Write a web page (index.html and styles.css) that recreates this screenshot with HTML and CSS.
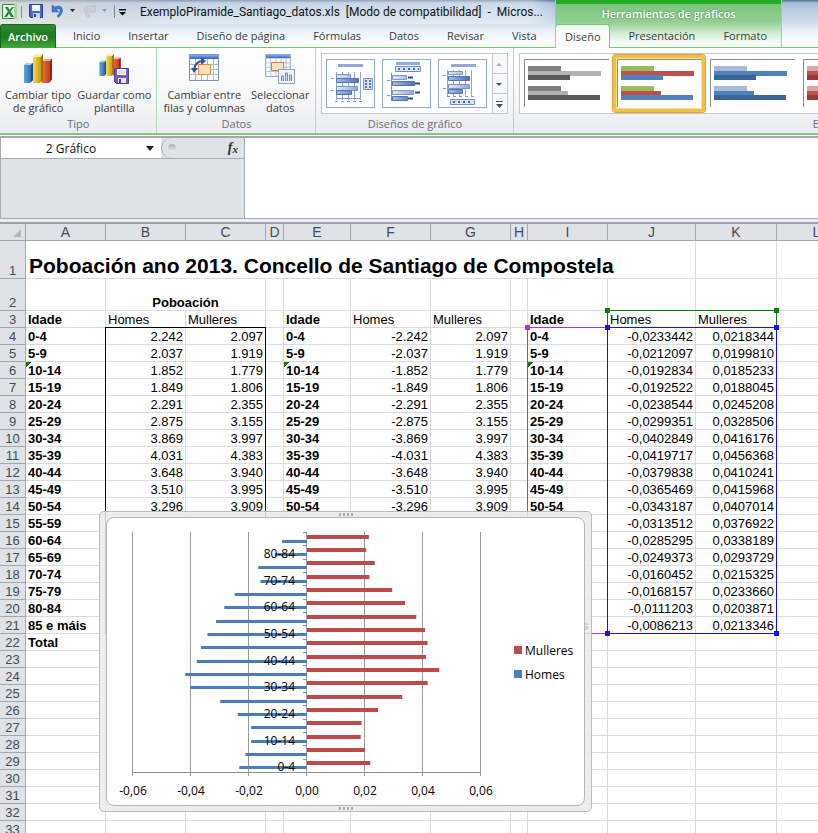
FILE: index.html
```html
<!DOCTYPE html>
<html lang="gl">
<head>
<meta charset="utf-8">
<title>ExemploPiramide_Santiago_datos.xls</title>
<link rel="stylesheet" href="styles.css">
</head>
<body>
<svg class="defs" aria-hidden="true">
  <defs>
    <linearGradient id="gb"><stop offset="0" stop-color="#5fa5e0"/><stop offset="1" stop-color="#27609f"/></linearGradient>
    <linearGradient id="gy"><stop offset="0" stop-color="#f7d94c"/><stop offset="1" stop-color="#b98c06"/></linearGradient>
    <linearGradient id="gr"><stop offset="0" stop-color="#f0704c"/><stop offset="1" stop-color="#b92f12"/></linearGradient>
    <linearGradient id="gh" x2="0" y2="1"><stop offset="0" stop-color="#7fb0f5"/><stop offset="1" stop-color="#2b62c9"/></linearGradient>
    <linearGradient id="gt"><stop offset="0" stop-color="#e4ecfa"/><stop offset="1" stop-color="#8ba6db"/></linearGradient>
    <linearGradient id="gd"><stop offset="0" stop-color="#a9bde4"/><stop offset="1" stop-color="#4d6fb5"/></linearGradient>
    <symbol id="bars" viewBox="0 0 28 29">
      <path d="M0 11l3-2h6v17l-3 3H0z" fill="url(#gb)"/><path d="M0 11l3-2h6l-2 2z" fill="#a8d2f4"/><path d="M7 11l2-2v17l-2 2z" fill="#1f4f86"/>
      <path d="M18 7l3-2h7v20l-3 4h-7z" fill="url(#gr)"/><path d="M18 7l3-2h7l-2 2z" fill="#ffab92"/><path d="M26 7l2-2v20l-2 3z" fill="#952209"/>
      <path d="M9 3l3-3h7v26l-3 3H9z" fill="url(#gy)"/><path d="M9 3l3-3h7l-2 3z" fill="#fff0a0"/><path d="M17 3l2-3v26l-2 2z" fill="#9a7304"/>
    </symbol>
    <symbol id="sheet" viewBox="0 0 30 27">
      <path d="M.5.5h29v26H.5z" fill="#fff" stroke="#7f93b8"/><path d="M1 1h28v4H1z" fill="url(#gh)"/>
      <path d="M1 10.500h28M1 15.500h28M1 20.500h28M6.500 5v21M12.500 5v21M18.500 5v21M24.500 5v21" stroke="#a9b8d4" fill="none"/>
    </symbol>
    <symbol id="disk" viewBox="0 0 15 16">
      <path d="M.5.5h14v15h-12l-2-2z" fill="#7560b8" stroke="#4f3d95"/><path d="M3 1h9v6H3z" fill="#fff"/><path d="M4 3h7M4 5h7" stroke="#c5bfdc"/><path d="M4 10h8v5H4z" fill="#e7e5f2"/><path d="M5 11h2v4H5z" fill="#4f3d95"/>
    </symbol>
  </defs>
</svg>

<header class="top">
  <div class="main-part">
    <div class="titlebar">
      <svg class="qat" viewBox="0 0 132 24" aria-hidden="true">
        <path d="M2.500 4.500h13v14h-13z" fill="#e8f5e4" stroke="#2d8a38"/><path d="M14 4h3v15h-3z" fill="#a7d4a0"/>
        <path d="M5 7h3l1.500 3L12 7h2l-3.500 4.500L14 17h-3l-2-3.500L7 17H4l4-5.500z" fill="#1e8a30"/>
        <path d="M21.500 6v12" stroke="#85909c"/>
        <path d="M29.500 4.500h13v13h-12l-1-1z" fill="#4668c8" stroke="#283e99"/><path d="M32 5h8v6h-8z" fill="#f2f6ff"/><path d="M33 13h7v5h-7z" fill="#cdd5ee"/><path d="M34 14h2v3h-2z" fill="#283e99"/>
        <path d="M52 5v7h7l-2.500-2.500C60 7 62 11 57 16l1.500 1.500C66 11 62 3 55 7z" fill="#3f7bd0" stroke="#2c5fae" stroke-width=".5"/>
        <path d="M70 9h5l-2.500 3z" fill="#222"/>
        <path d="M95 5v7h-7l2.500-2.500C87 7 85 11 90 16l-1.500 1.500C81 11 85 3 92 7z" fill="#cdd1d5" stroke="#a9afb5" stroke-width=".5"/>
        <path d="M102 9h5l-2.500 3z" fill="#9299a2"/>
        <path d="M114.500 5v13" stroke="#7d8894"/><path d="M119 9h7v1.500h-7zM119 12h7l-3.500 3.500z" fill="#111"/>
      </svg>
      <span class="doc-title">ExemploPiramide_Santiago_datos.xls&nbsp; [Modo de compatibilidad] &nbsp;-&nbsp; Micros...</span>
    </div>
    <nav class="tabs">
      <button class="file-tab">Archivo</button>
      <button>Inicio</button><button>Insertar</button><button>Diseño de página</button><button>Fórmulas</button><button>Datos</button><button>Revisar</button><button>Vista</button>
    </nav>
  </div>
  <div class="context-part">
    <div class="context-title">Herramientas de gráficos</div>
    <nav class="tabs">
      <button class="active">Diseño</button><button>Presentación</button><button>Formato</button>
    </nav>
  </div>
</header>

<section class="ribbon">
  <div class="group">
    <div class="tools">
      <button class="tool"><svg width="28" height="29"><use href="#bars"/></svg><span>Cambiar tipo<br>de gráfico</span></button>
      <button class="tool"><svg width="32" height="30"><use href="#bars" width="26" height="22" x="-1"/><use href="#disk" x="16" y="14" width="15" height="16"/></svg><span>Guardar como<br>plantilla</span></button>
    </div>
    <h2>Tipo</h2>
  </div>
  <div class="group data-group">
    <div class="tools">
      <button class="tool"><svg width="30" height="27"><use href="#sheet" width="30" height="27"/><path d="M9.500 10.500h12v10h-12z" fill="#fde3bd" stroke="#ec8b33"/><path d="M5 16C6 10 9 7 14 7" fill="none" stroke="#2c55a0" stroke-width="2"/><path d="M2 14h7l-4 5zM12 3l5 4-5 4z" fill="#2c55a0"/></svg><span>Cambiar entre<br>filas y columnas</span></button>
      <button class="tool"><svg width="30" height="31"><use href="#sheet" width="26" height="23" x="0"/><path d="M6.500 8.500h12v8h-12z" fill="#fde3bd" stroke="#ec7b23"/><path d="M13.500 15.500h16v14h-16z" fill="#f2f6fc" stroke="#8ba0c4"/><path d="M16.500 27v-5h2v5M20.500 27v-8h2v8M24.500 27v-6h2v6" fill="#c8d8f0" stroke="#6f8fc4"/></svg><span>Seleccionar<br>datos</span></button>
    </div>
    <h2>Datos</h2>
  </div>
  <div class="group">
    <div class="gallery">
      <div class="thumbs">
      <button class="thumb" aria-label="Deseño 1"><svg viewBox="0 0 47 47">
        <path d="M11 4h25v3H11z" fill="#8fabdd"/><path d="M9.500 12v28M15.500 12v28M21.500 12v28M27.500 12v28M33.500 12v28" stroke="#8fa6d4"/>
        <path d="M9.500 14.500h14v4h-14zM9.500 26.500h21v4h-21z" fill="url(#gt)" stroke="#7c97cc"/><path d="M9.500 18.500h22v4h-22zM9.500 30.500h15v4h-15z" fill="url(#gd)" stroke="#5674b3"/>
        <path d="M4 18.500h3M4 30.500h3M9 38.500h25" stroke="#7c9ad4"/><path d="M8 41.500h27" stroke="#7c9ad4" stroke-dasharray="3 3"/>
        <path d="M36.500 18.500h9v11h-9z" fill="#dbe5f7" stroke="#6e8fcd"/><path d="M38 20h2v2h-2zM42 20h2v2h-2zM38 23h2v2h-2zM42 23h2v2h-2zM38 26h2v2h-2zM42 26h2v2h-2z" fill="#4c74c6"/></svg></button>
      <button class="thumb" aria-label="Deseño 2"><svg viewBox="0 0 47 47">
        <path d="M13 2h24v3H13z" fill="#8fabdd"/><path d="M12.500 6.500h25v5h-25z" fill="#dbe5f7" stroke="#6e8fcd"/><path d="M15 9h21" stroke="#3f68bd" stroke-width="2" stroke-dasharray="2 3"/>
        <path d="M8.500 13v28" stroke="#6f8ccc"/><path d="M9.500 15.500h14v4h-14zM9.500 30.500h21v4h-21z" fill="url(#gt)" stroke="#7c97cc"/><path d="M9.500 21.500h22v4h-22zM9.500 36.500h15v4h-15z" fill="url(#gd)" stroke="#5674b3"/>
        <path d="M4 20.500h3M4 35.500h3" stroke="#7c9ad4"/><path d="M25 17.500h5M32 23.500h5M32 32.500h5M25 38.500h5" stroke="#294f91" stroke-width="2"/></svg></button>
      <button class="thumb" aria-label="Deseño 3"><svg viewBox="0 0 47 47">
        <path d="M12 4h25v3H12z" fill="#8fabdd"/><path d="M8.500 10v26M14.500 10v26M20.500 10v26M26.500 10v26M32.500 10v26" stroke="#8fa6d4"/>
        <path d="M9.500 11.500h14v3h-14zM9.500 24.500h21v4h-21z" fill="url(#gt)" stroke="#7c97cc"/><path d="M9.500 16.500h21v4h-21zM9.500 29.500h14v4h-14z" fill="url(#gd)" stroke="#5674b3"/>
        <path d="M4 15.500h3M4 28.500h3" stroke="#7c9ad4"/><path d="M8 36.500h27" stroke="#7c9ad4" stroke-dasharray="3 3"/>
        <path d="M11.500 39.500h24v5h-24z" fill="#dbe5f7" stroke="#6e8fcd"/><path d="M14 42h20" stroke="#3f68bd" stroke-width="2" stroke-dasharray="2 3"/></svg></button>
      </div>
      <div class="scroller">
        <button disabled aria-label="Arriba"><svg viewBox="0 0 12 18"><path d="M3 11h6l-3-3z" fill="#a9adb3"/></svg></button>
        <button aria-label="Abaixo"><svg viewBox="0 0 12 18"><path d="M3 8h6l-3 3z" fill="#4b4f55"/></svg></button>
        <button aria-label="Máis"><svg viewBox="0 0 12 18"><path d="M3 6h7v1H3zM3 9h7l-3.500 4z" fill="#4b4f55"/></svg></button>
      </div>
    </div>
    <h2>Diseños de gráfico</h2>
  </div>
  <div class="group styles-group">
    <div class="style-gallery" id="styleGallery"></div>
    <h2>Estilos de diseño</h2>
  </div>
</section>

<section class="formula">
  <div class="formula-left">
    <div class="name-row">
      <label class="name-box"><input value="2 Gráfico" aria-label="Cadro de nomes"><svg viewBox="0 0 8 5"><path d="M0 0h8L4 5z" fill="#222"/></svg></label>
      <div class="fx"><i></i><button>f<sub>x</sub></button></div>
    </div>
  </div>
  <textarea aria-label="Barra de fórmulas"></textarea>
</section>

<main class="sheet">
  <table id="grid">
    <colgroup><col class="w-head"><col class="w80"><col class="w80"><col class="w80"><col class="w18"><col class="w67"><col class="w80"><col class="w80"><col class="w17"><col class="w80"><col class="w88"><col class="w81"><col></colgroup>
    <thead><tr><th class="corner"><svg viewBox="0 0 8 8"><path d="M8 0v8H0z" fill="#b4b8be"/></svg></th><th>A</th><th>B</th><th>C</th><th>D</th><th>E</th><th>F</th><th>G</th><th>H</th><th>I</th><th>J</th><th>K</th><th>L</th></tr></thead>
    <tbody></tbody>
  </table>
  <div class="range black"></div>
  <div class="range purple"><i></i><i></i><i></i><i></i></div>
  <div class="range green"><i></i><i></i><i></i><i></i></div>
  <div class="range blue"><i></i><i></i><i></i><i></i></div>
  <figure class="chart"><svg id="chart" viewBox="0 0 477 287" role="img" aria-label="Mulleres, Homes"></svg></figure>
</main>
<script src="script.js"></script>
</body>
</html>
```
FILE: styles.css
```css
* { box-sizing: border-box; }
body {
  margin: 0;
  height: 100vh;
  overflow: hidden;
  display: flex;
  flex-direction: column;
  background: #fff;
  font-family: "Open Sans", "Noto Sans", sans-serif;
  font-size: 11px;
  color: #3b3b3b;
}
button { font: inherit; color: inherit; border: 0; padding: 0; background: none; white-space: nowrap; }
h2 { margin: 0; font: inherit; }
svg { display: block; }
.defs { position: absolute; width: 0; height: 0; }

/* Title bar and tabs */
.top {
  display: flex;
  flex: none;
  height: 48px;
  border-bottom: 1px solid #6ccb6c;
  background: linear-gradient(#54708f 0, #a9bfd8 3px, #bccfe4 12px, #cddbea 22px, #edf3f9 32px, #fff 44px);
}
.main-part { flex: none; width: 555px; }
.titlebar {
  display: flex;
  align-items: center;
  height: 24px;
  gap: 8px;
  background: linear-gradient(90deg, rgba(255,235,215,.5), rgba(225,225,230,.5) 120px, rgba(255,255,255,.3) 160px, rgba(255,255,255,.4) 530px, transparent);
}
.qat { width: 132px; height: 24px; flex: none; }
.doc-title { font-family: Roboto, "Open Sans", sans-serif; font-size: 12px; color: #111; white-space: nowrap; }
.tabs { display: flex; height: 24px; }
.tabs button { padding: 0 14px; height: 23px; }
.tabs .file-tab {
  width: 56px;
  height: 24px;
  padding: 0;
  margin-right: 3px;
  border: 1px solid #15681a;
  border-bottom: 0;
  border-radius: 3px 3px 0 0;
  background: linear-gradient(#2f8b33, #1d7a20 50%, #45aa3d);
  color: #fff;
  font-weight: 600;
}
.context-part {
  flex: none;
  width: 227px;
  border: 1px solid #8fd98f;
  border-width: 0 1px;
  background: linear-gradient(#23ad23 4px, #7cc47c 4px, #93cf93 22px, #d5eed5 34px, #fff 46px);
}
.context-title {
  height: 24px;
  padding-top: 4px;
  line-height: 20px;
  text-align: center;
  font-weight: 600;
  color: #fff;
  text-shadow: 0 0 2px #3f7f3f;
}
.context-part .tabs .active {
  height: 24px;
  width: 61px;
  padding: 0;
  margin-right: 4px;
  border: 1px solid #6ccb6c;
  border-width: 1px 1px 0 0;
  border-radius: 3px 3px 0 0;
  background: linear-gradient(#eef7ee, #fff 8px);
}

/* Ribbon */
.ribbon {
  display: flex;
  flex: none;
  height: 87px;
  border-bottom: 2px solid #86c08a;
  background: linear-gradient(#fff, #f6f7f8 60%, #e9ebee);
  overflow: hidden;
}
.group {
  flex: none;
  display: flex;
  flex-direction: column;
  justify-content: space-between;
  border-right: 1px solid #b0dcb2;
  padding: 5px 5px 0;
}
.group h2 { text-align: center; line-height: 18px; color: #66707c; }
.tools { display: flex; gap: 6px; padding-top: 1px; }
.data-group { padding: 5px 6px 0; }
.tool { display: flex; flex-direction: column; align-items: center; justify-content: space-between; height: 60px; line-height: 13px; }
.gallery { display: flex; height: 61px; border: 1px solid #c3c8ce; background: #fff; padding-left: 4px; gap: 5px; align-items: center; }
.thumbs { display: flex; gap: 7px; }
.thumb { width: 49px; height: 49px; border: 1px solid #94a9cb; background: #fff; }
.scroller { display: flex; flex-direction: column; width: 15px; height: 59px; border-left: 1px solid #c3c8ce; background: #f7f8f9; }
.scroller button { flex: 1; min-height: 0; border-bottom: 1px solid #c3c8ce; }
.scroller svg { height: 18px; }
.scroller button:last-child { border-bottom: 0; }
.styles-group { flex: 1 0 682px; border-right: 0; }
.style-gallery { display: flex; height: 61px; border: 1px solid #c3c8ce; background: #fff; gap: 1px; overflow: hidden; }
.style { flex: none; width: 92px; height: 57px; margin-top: 1px; border: 3px solid transparent; border-radius: 3px; }
.style.selected { border-color: #f0bf45; box-shadow: inset 0 0 0 1px #fbe08e, 0 0 0 1px #d9a53c; }

/* Formula bar */
.formula { display: flex; flex: none; height: 88px; margin-top: 1px; border-top: 2px solid #a3a8ae; border-bottom: 2px solid #9b9fa8; background: #e9edf3; padding-bottom: 3px; }
.formula-left { width: 245px; flex: none; background: #dfe2e7; border: 1px solid #a7abb2; border-top: 0; }
.name-row { display: flex; height: 21px; border-bottom: 1px solid #a7abb2; }
.name-box { display: flex; align-items: center; width: 160px; background: #fff; }
.name-box input { width: 140px; height: 19px; border: 0; padding: 0; outline: 0; background: none; text-align: center; font: 12px "Open Sans", sans-serif; color: #111; }
.name-box svg { width: 8px; height: 5px; margin-left: 5px; }
.fx { display: flex; flex: 1; align-items: center; justify-content: space-between; padding: 0 6px; border-left: 1px solid #a7abb2; border-radius: 10px 0 0 10px; background: #dfe2e7; }
.fx i { width: 8px; height: 8px; border-radius: 4px; background: linear-gradient(#aaaeb3, #eef0f2); }
.fx button { font: italic bold 14px/18px "Liberation Serif", serif; color: #333; }
.fx sub { font-size: 11px; vertical-align: -1px; }
.formula textarea { flex: 1; border: 0; border-bottom: 1px solid #a7abb2; resize: none; padding: 0; outline: 0; }

/* Worksheet */
.sheet { position: relative; flex: 1; min-height: 0; overflow: hidden; font-family: "Liberation Sans", Arial, sans-serif; font-size: 13px; color: #000; }
table { width: 100%; min-width: 857px; table-layout: fixed; border-collapse: separate; border-spacing: 0; }
.w-head { width: 26px; }
.w80 { width: 80px; }
.w18 { width: 18px; }
.w67 { width: 67px; }
.w17 { width: 17px; }
.w88 { width: 88px; }
.w81 { width: 81px; }
td, th { height: 17px; padding: 0 2px; line-height: 14px; border: 1px solid #d9dbde; border-width: 0 1px 1px 0; white-space: nowrap; vertical-align: bottom; text-align: left; }
th { font-weight: 400; text-align: center; color: #444a52; background: #dfe2e7; border-color: #a3a8b0; padding: 0; }
thead th { font-size: 14px; height: 17px; line-height: 16px; }
.corner svg { width: 8px; height: 8px; margin: 0 4px 3px auto; }
td.num { text-align: right; }
td.b { font-weight: 700; }
td.center { text-align: center; }
td.flag { background: linear-gradient(135deg, #0a7d0a 4px, transparent 4px) no-repeat; }
.row1 > * { height: 38px; }
.row1 .title { padding-left: 3px; font-size: 21px; font-weight: 700; line-height: 24px; }
.row2 > * { height: 32px; }

/* Highlighted ranges over the grid */
.range { position: absolute; border: 1px solid currentColor; }
.range i { position: absolute; width: 5px; height: 5px; background: currentColor; }
.range i:nth-child(1) { left: -3px; top: -3px; }
.range i:nth-child(2) { right: -3px; top: -3px; }
.range i:nth-child(3) { left: -3px; bottom: -3px; }
.range i:nth-child(4) { right: -3px; bottom: -3px; }
.black { left: 105px; top: 103px; width: 161px; height: 307px; }
.purple { left: 527px; top: 103px; width: 81px; height: 307px; color: #b030e0; }
.green { left: 607px; top: 86px; width: 170px; height: 18px; color: #0a800a; }
.blue { left: 607px; top: 103px; width: 170px; height: 307px; color: #1010ff; }

/* Floating chart */
.chart {
  position: absolute;
  left: 99px;
  top: 287px;
  width: 493px;
  height: 301px;
  margin: 0;
  padding: 5px 6px;
  border: 1px solid #b9bcbe;
  border-radius: 5px;
  background: rgba(232, 234, 235, .85);
}
.chart::before, .chart::after {
  content: "";
  position: absolute;
  left: 239px;
  width: 14px;
  height: 3px;
  background: repeating-linear-gradient(90deg, #a9acae 0 2px, transparent 2px 4px);
}
.chart::before { top: 1px; }
.chart::after { bottom: 1px; }
.chart svg { width: 100%; height: 100%; background: #fff; border: 1px solid #b4b7b9; border-radius: 8px; font-family: "Open Sans", sans-serif; font-size: 12px; }
```
FILE: script.js
```js
const ages = ["0-4", "5-9", "10-14", "15-19", "20-24", "25-29", "30-34", "35-39", "40-44",
  "45-49", "50-54", "55-59", "60-64", "65-69", "70-74", "75-79", "80-84", "85 e máis"];
const men = ["2.242", "2.037", "1.852", "1.849", "2.291", "2.875", "3.869", "4.031", "3.648", "3.510", "3.296"];
const women = ["2.097", "1.919", "1.779", "1.806", "2.355", "3.155", "3.997", "4.383", "3.940", "3.995", "3.909"];
const menShare = ["-0,0233442", "-0,0212097", "-0,0192834", "-0,0192522", "-0,0238544", "-0,0299351",
  "-0,0402849", "-0,0419717", "-0,0379838", "-0,0365469", "-0,0343187", "-0,0313512", "-0,0285295",
  "-0,0249373", "-0,0160452", "-0,0168157", "-0,0111203", "-0,0086213"];
const womenShare = ["0,0218344", "0,0199810", "0,0185233", "0,0188045", "0,0245208", "0,0328506",
  "0,0416176", "0,0456368", "0,0410241", "0,0415968", "0,0407014", "0,0376922", "0,0338189",
  "0,0293729", "0,0215325", "0,0233660", "0,0203871", "0,0213346"];
const num = s => parseFloat(s.replace(",", "."));

/* Worksheet rows */
const cell = (text = "", cls = "", span = 1) =>
  `<td${cls ? ` class="${cls}"` : ""}${span > 1 ? ` colspan="${span}"` : ""}>${text}</td>`;
const blank = n => cell().repeat(n);
let rows = `<tr class="row1"><th>1</th>${cell("Poboación ano 2013. Concello de Santiago de Compostela", "title", 10)}${blank(2)}</tr>`;
rows += `<tr class="row2"><th>2</th>${blank(1)}${cell("Poboación", "b center", 2)}${blank(9)}</tr>`;
rows += `<tr><th>3</th>${cell("Idade", "b")}${cell("Homes")}${cell("Mulleres")}${blank(1)}${cell("Idade", "b")}${cell("Homes")}${cell("Mulleres")}${blank(1)}${cell("Idade", "b")}${cell("Homes")}${cell("Mulleres")}${blank(1)}</tr>`;
ages.forEach((age, i) => {
  const label = cell(age, i === 2 ? "b flag" : "b");
  const m = men[i] || "", w = women[i] || "";
  rows += `<tr><th>${i + 4}</th>${label}${cell(m, "num")}${cell(w, "num")}${blank(1)}${label}` +
    `${cell(m && "-" + m, "num")}${cell(w, "num")}${blank(1)}${label}${cell(menShare[i], "num")}${cell(womenShare[i], "num")}${blank(1)}</tr>`;
});
rows += `<tr><th>22</th>${cell("Total", "b")}${blank(11)}</tr>`;
for (let r = 23; r <= 33; r++) rows += `<tr><th>${r}</th>${blank(12)}</tr>`;
document.querySelector("#grid tbody").innerHTML = rows;

/* Population pyramid */
const zero = 200, unit = 2900, plotTop = 14, plotBottom = 254;
const step = (plotBottom - plotTop) / ages.length;
let svg = "";
for (let k = -3; k <= 3; k++) {
  const x = zero + k * 58;
  svg += `<path d="M${x - 0.5} ${plotTop}V${plotBottom + 4}" stroke="#9a9a9a"/>`;
  svg += `<text x="${x}" y="277" text-anchor="middle">${(k * 0.02).toFixed(2).replace(".", ",")}</text>`;
}
svg += `<path d="M26 ${plotBottom + 0.5}H374" stroke="#8c8c8c"/>`;
ages.forEach((age, i) => {
  const mid = plotBottom - step * (i + 0.5);
  const m = -num(menShare[i]) * unit, w = num(womenShare[i]) * unit;
  svg += `<rect x="${zero - m}" y="${Math.round(mid + 1)}" width="${m}" height="3" fill="#4a7ebb"/>`;
  svg += `<rect x="${zero}" y="${Math.round(mid - 4)}" width="${w}" height="4" fill="#be4b48"/>`;
});
for (let i = 0; i <= ages.length; i++) {
  const y = Math.round(plotBottom - step * i) + 0.5;
  svg += `<path d="M${zero - 4} ${y}H${zero}" stroke="#8c8c8c"/>`;
}
for (let i = 0; i < ages.length; i += 2) {
  svg += `<text x="188" y="${Math.round(plotBottom - step * (i + 0.5) + 6)}" text-anchor="end">${ages[i]}</text>`;
}
svg += `<rect x="407" y="128" width="8" height="8" fill="#be4b48"/><text x="418" y="137">Mulleres</text>`;
svg += `<rect x="407" y="152" width="8" height="8" fill="#4a7ebb"/><text x="418" y="161">Homes</text>`;
document.getElementById("chart").innerHTML = svg;

/* Chart style swatches */
const palettes = [
  ["#7f7f7f", "#b2b2b2", "#5a5a5a"], ["#9bbb59", "#c0504d", "#4f81bd"], ["#a9b9dc", "#4f81bd", "#3a6599"],
  ["#dca5a5", "#c0504d", "#963b39"]
];
document.getElementById("styleGallery").innerHTML = palettes.map(([a, b, c], i) =>
  `<button class="style${i === 1 ? " selected" : ""}" aria-label="Estilo ${i + 1}"><svg viewBox="0 0 86 51">` +
  `<path d="M1.500 49V1.500H86" fill="none" stroke="#8c8c8c"/>` +
  [[8, 33, a], [13, 73, b], [17, 42, c], [28, 33, a], [33, 40, b], [37, 72, c]]
    .map(([y, w, f]) => `<rect x="5" y="${y}" width="${w}" height="5" fill="${f}"/>`).join("") +
  `</svg></button>`).join("");
```
